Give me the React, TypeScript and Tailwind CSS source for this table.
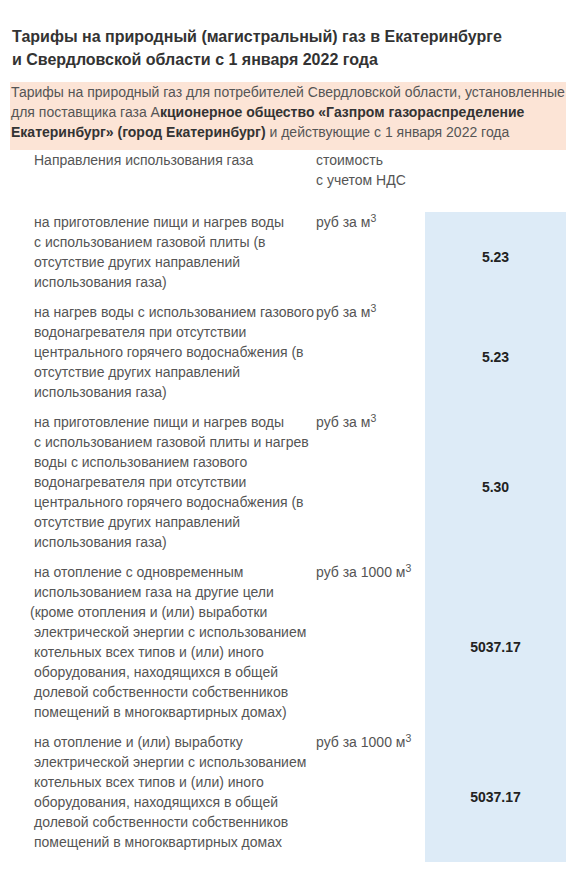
import React from "react";

const font = { fontFamily: '"Liberation Sans", Arial, sans-serif' };

type Row = { lines: React.ReactNode[]; unit: React.ReactNode; value: string };

const M3 = () => (
  <>
    м<sup>3</sup>
  </>
);

const rows: Row[] = [
  {
    lines: [
      "на приготовление пищи и нагрев воды",
      "с использованием газовой плиты (в",
      "отсутствие других направлений",
      "использования газа)",
    ],
    unit: (
      <>
        руб за <M3 />
      </>
    ),
    value: "5.23",
  },
  {
    lines: [
      "на нагрев воды с использованием газового",
      "водонагревателя при отсутствии",
      "центрального горячего водоснабжения (в",
      "отсутствие других направлений",
      "использования газа)",
    ],
    unit: (
      <>
        руб за <M3 />
      </>
    ),
    value: "5.23",
  },
  {
    lines: [
      "на приготовление пищи и нагрев воды",
      "с использованием газовой плиты и нагрев",
      "воды с использованием газового",
      "водонагревателя при отсутствии",
      "центрального горячего водоснабжения (в",
      "отсутствие других направлений",
      "использования газа)",
    ],
    unit: (
      <>
        руб за <M3 />
      </>
    ),
    value: "5.30",
  },
  {
    lines: [
      "на отопление с одновременным",
      "использованием газа на другие цели",
      <span className="-ml-[4px]">(кроме отопления и (или) выработки</span>,
      "электрической энергии с использованием",
      "котельных всех типов и (или) иного",
      "оборудования, находящихся в общей",
      "долевой собственности собственников",
      "помещений в многоквартирных домах)",
    ],
    unit: (
      <>
        руб за 1000 <M3 />
      </>
    ),
    value: "5037.17",
  },
  {
    lines: [
      "на отопление и (или) выработку",
      "электрической энергии с использованием",
      "котельных всех типов и (или) иного",
      "оборудования, находящихся в общей",
      "долевой собственности собственников",
      "помещений в многоквартирных домах",
    ],
    unit: (
      <>
        руб за 1000 <M3 />
      </>
    ),
    value: "5037.17",
  },
];

export default function App() {
  return (
    <div className="w-[566px] min-h-[869px] bg-white overflow-hidden" style={font}>
      <h1 className="pt-[25px] pl-[12px] text-[16px] leading-[23px] font-bold text-[#333333] whitespace-nowrap">
        Тарифы на природный (магистральный) газ в Екатеринбурге
        <br />
        и Свердловской области с 1 января 2022 года
      </h1>
      <div className="mt-[11px] ml-[10px] bg-[#fce4d6] pl-[1px] pb-[8px] text-[14px] leading-[20px] text-[#555555] whitespace-nowrap">
        Тарифы на природный газ для потребителей Свердловской области, установленные
        <br />
        для поставщика газа А
        <b className="font-bold text-[#333333]">кционерное общество «Газпром газораспределение</b>
        <br />
        <b className="font-bold text-[#333333]">Екатеринбург» (город Екатеринбург)</b> и действующие с 1 января 2022 года
      </div>
      <div className="text-[14px] leading-[20px] text-[#555555]">
        <div className="flex h-[62px]">
          <div className="w-[316px] pl-[34px] whitespace-nowrap">
            Направления использования газа
          </div>
          <div className="w-[109px] whitespace-nowrap">
            стоимость
            <br />с учетом НДС
          </div>
          <div className="flex-1" />
        </div>
        {rows.map((r, i) => (
          <div key={i} className="flex">
            <div className="w-[316px] pl-[34px] pb-[10px] whitespace-nowrap">
              {r.lines.map((l, j) => (
                <div key={j}>{l}</div>
              ))}
            </div>
            <div className="w-[109px] whitespace-nowrap">{r.unit}</div>
            <div className="flex-1 bg-[#ddebf7] flex items-center justify-center font-bold text-[#222222]">
              {r.value}
            </div>
          </div>
        ))}
      </div>
    </div>
  );
}
